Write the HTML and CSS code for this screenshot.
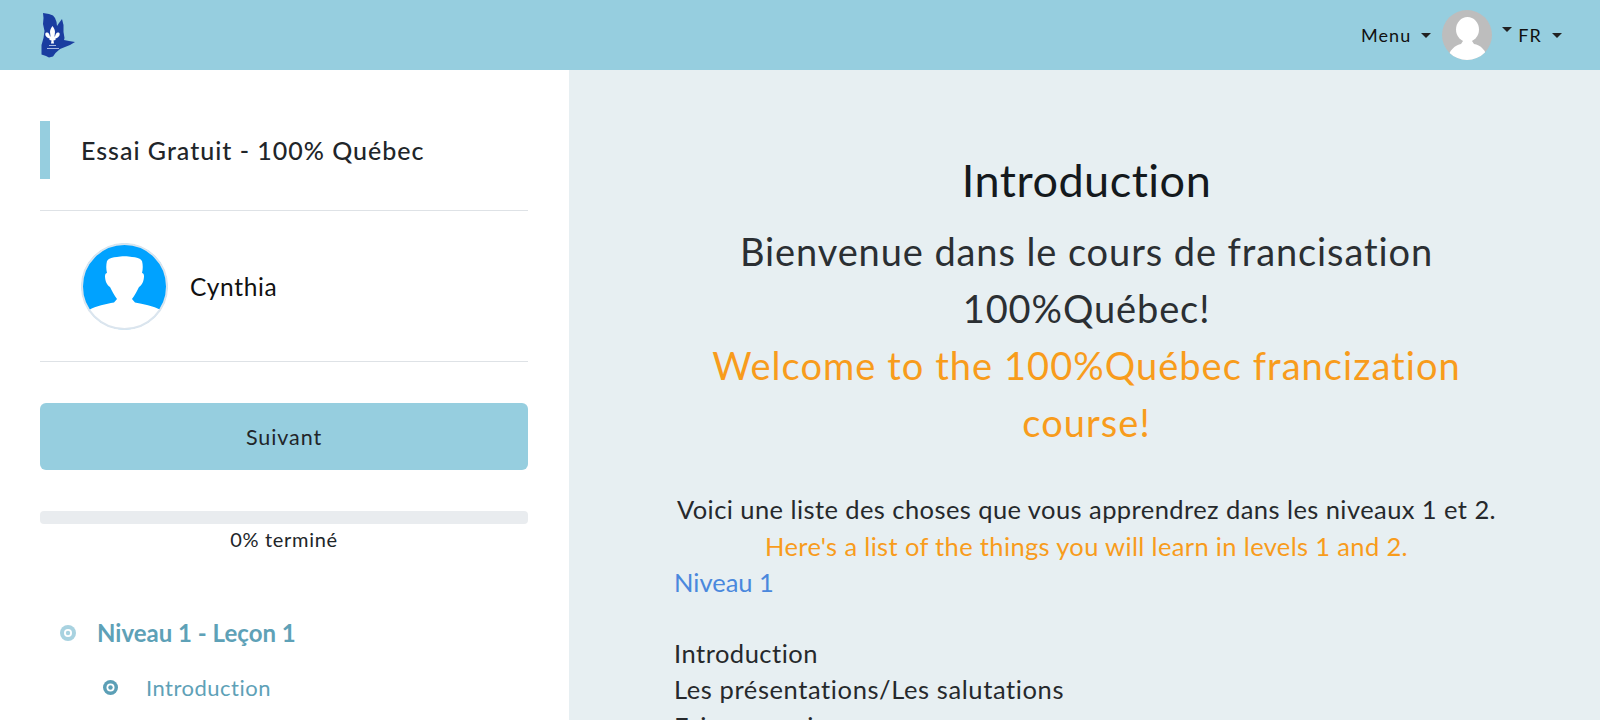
FILE: index.html
```html
<!DOCTYPE html>
<html lang="fr">
<head>
<meta charset="utf-8">
<title>Introduction</title>
<link rel="stylesheet" href="styles.css">
</head>
<body>
<header class="topbar">
  <svg class="logo" viewBox="0 0 36 46" width="36" height="46" aria-hidden="true">
    <path fill="#1a3da0" d="M3 1L9 2L13 3.500L15 6L16.500 10L17 14L19 11L22 7L23.500 13L23.500 20L24.500 26L24 28L29 29L35 30L30 33L25 35L20 37L15.500 41L13 44.500L9 45.500L6 44L1.500 42.500L1.500 33L3.500 26L4.500 19L3 12L3.500 6Z"/>
    <path fill="#fff" d="M12.500 14C14 16 15 18 15 20C15 21.500 14.500 23 14.500 24.500H15C15.500 22 16.500 20 18.500 20.500C20.500 21 20 24.500 17 26L15.500 26.500V28L13.500 28.500L14 31.500H11L11.500 28.500L9.500 28V26.500L8 26C5 24.500 4.500 21 6.500 20.500C8.500 20 9.500 22 10 24.500H10.500C10.500 23 10 21.500 10 20C10 18 11 16 12.500 14Z"/>
    <path fill="#a9b9e2" d="M9 33h7v1h-7zM7 36h12v1h-12z"/>
  </svg>
  <nav class="topnav">
    <a class="dropdown">Menu</a>
    <svg class="avatar" viewBox="0 0 50 50" width="50" height="50" aria-hidden="true">
      <clipPath id="avatarClip"><circle cx="25" cy="25" r="25"/></clipPath>
      <circle cx="25" cy="25" r="25" fill="#bdbdbd"/>
      <g clip-path="url(#avatarClip)" fill="#fff">
        <ellipse cx="25.500" cy="19.500" rx="11.500" ry="12.500"/>
        <path d="M6 50C6 40 14 35 19 34L21 31H30L32 34C38 35 45 40 45 50Z"/>
      </g>
    </svg>
    <span class="caret caret-high"></span>
    <a class="dropdown">FR</a>
  </nav>
</header>
<div class="layout">
  <aside class="sidebar">
    <div class="course-title"><h2>Essai Gratuit - 100% Québec</h2></div>
    <div class="profile">
      <svg class="student" viewBox="0 0 87 87" width="87" height="87" aria-hidden="true">
        <clipPath id="studentClip"><circle cx="43.500" cy="43.500" r="43"/></clipPath>
        <circle cx="43.500" cy="43.500" r="43" fill="#00a2ff"/>
        <path clip-path="url(#studentClip)" fill="#fff" d="M8 67C15 63 25 61 33 59.500L36 56C33 52 31 48 29 44C26 42 24 38 24 33C24 31 25 30 26 30C25 26 25 22 26 18C28 15 32 14 36 14C40 13 47 13 51 14C55 14 59 15 61 18C62 22 62 26 61 30C62 30 63 31 63 33C63 38 61 42 58 44C56 48 54 52 51 56L54 59.500C62 61 72 63 80 67L87 87H0Z"/>
        <circle cx="43.500" cy="43.500" r="42.500" fill="none" stroke="#dbe5ee" stroke-width="2"/>
      </svg>
      <span class="student-name">Cynthia</span>
    </div>
    <a class="next-btn">Suivant</a>
    <div class="progress"></div>
    <p class="progress-label">0% terminé</p>
    <div class="lesson">
      <svg class="dot dot-light" viewBox="0 0 16 16" width="16" height="16" aria-hidden="true"><circle cx="8" cy="8" r="8"/><circle cx="8" cy="8" r="4" fill="#fff"/><circle cx="8" cy="8" r="2.200"/></svg>
      <strong>Niveau 1 - Leçon 1</strong>
    </div>
    <div class="sublesson">
      <svg class="dot dot-dark" viewBox="0 0 15 15" width="15" height="15" aria-hidden="true"><circle cx="7.500" cy="7.500" r="7.500"/><circle cx="7.500" cy="7.500" r="4" fill="#fff"/><circle cx="7.500" cy="7.500" r="2.200"/></svg>
      <span>Introduction</span>
    </div>
  </aside>
  <main class="content">
    <h1>Introduction</h1>
    <h2 class="welcome">Bienvenue dans le cours de francisation 100%Québec!<br><span class="en">Welcome to the 100%Québec francization course!</span></h2>
    <div class="body-text">
      <p class="center intro-line">Voici une liste des choses que vous apprendrez dans les niveaux 1 et 2.</p>
      <p class="center en">Here's a list of the things you will learn in levels 1 and 2.</p>
      <p class="level">Niveau 1</p>
      <p class="blank">&nbsp;</p>
      <p>Introduction</p>
      <p class="wide-line">Les présentations/Les salutations</p>
      <p>Faire connaissance</p>
    </div>
  </main>
</div>
</body>
</html>
```
FILE: styles.css
```css
* { box-sizing: border-box; }
html, body { margin: 0; height: 720px; overflow: hidden; }
body { font-family: "Lato", "Liberation Sans", sans-serif; color: #212529; background: #fff; }

.topbar {
  height: 70px;
  background: #96cedf;
  display: flex;
  align-items: center;
  justify-content: space-between;
  padding: 0 38px 0 40px;
}
.logo { display: block; margin-top: -1px; }
.topnav { display: flex; align-items: center; font-size: 18px; letter-spacing: 1.100px; color: #111; }
.dropdown { display: flex; align-items: center; }
.dropdown::after, .caret {
  content: "";
  display: inline-block;
  width: 0; height: 0;
  border-top: 5px solid #222;
  border-left: 5px solid transparent;
  border-right: 5px solid transparent;
}
.dropdown::after { margin-left: 10px; }
.avatar { margin-left: 11px; display: block; }
.caret-high { margin: 0 6px 0 10px; transform: translateY(-6px); }

.layout { display: flex; height: 650px; }
.sidebar { width: 569px; flex: none; padding: 51px 41px 0 40px; background: #fff; }
.course-title { border-left: 10px solid #96cedf; height: 58px; display: flex; align-items: center; padding-left: 31px; }
.course-title h2 { margin: 0; font-size: 25px; font-weight: 500; letter-spacing: 1px; color: #212529; }
.profile {
  margin-top: 31px;
  height: 152px;
  border-top: 1px solid #dee2e6;
  border-bottom: 1px solid #dee2e6;
  display: flex;
  align-items: center;
  padding-left: 41px;
  gap: 22px;
}
.student { display: block; }
.student-name { font-size: 24.500px; color: #111; letter-spacing: 0.700px; }
.next-btn {
  display: flex;
  align-items: center;
  justify-content: center;
  margin-top: 41px;
  height: 67px;
  background: #96cedf;
  border-radius: 6px;
  font-size: 21.500px;
  letter-spacing: 0.900px;
  color: #212529;
}
.progress { margin-top: 41px; height: 13px; border-radius: 4px; background: #e9ecef; }
.progress-label { margin: 2px 0 0; text-align: center; font-size: 20px; line-height: 27px; letter-spacing: 0.700px; color: #212529; }
.lesson { display: flex; align-items: center; margin: 65px 0 0 20px; gap: 21px; font-size: 24px; color: #5ea1b7; }
.lesson strong { font-weight: 700; }
.sublesson { display: flex; align-items: center; margin: 27px 0 0 63px; gap: 28px; font-size: 22px; color: #5ea1b7; letter-spacing: 0.500px; }
.dot { display: block; flex: none; }
.dot-light { fill: #a8d2e0; }
.dot-dark { fill: #5b9fb6; }

.content { flex: 1; background: #e7eff2; padding: 79px 101px 0 105px; }
h1 { margin: 0; text-align: center; font-size: 45px; line-height: 62px; font-weight: 400; letter-spacing: 0.500px; color: #14191d; }
.welcome { margin: 12px 0 0; text-align: center; font-size: 38px; line-height: 57px; font-weight: 400; letter-spacing: 0.900px; color: #2b2f33; }
.welcome .en { letter-spacing: 1.050px; }
.en { color: #f89c1c; }
.body-text { margin-top: 40px; font-size: 25.500px; line-height: 36.500px; letter-spacing: 0.500px; color: #26292c; }
.body-text p { margin: 0; }
.center { text-align: center; white-space: nowrap; }
.body-text .intro-line { letter-spacing: 0.430px; }
.body-text .en { letter-spacing: 0.350px; }
.body-text .wide-line { letter-spacing: 0.600px; }
.level { color: #4a88dd; letter-spacing: 0; }
.blank { height: 34px; }
```
